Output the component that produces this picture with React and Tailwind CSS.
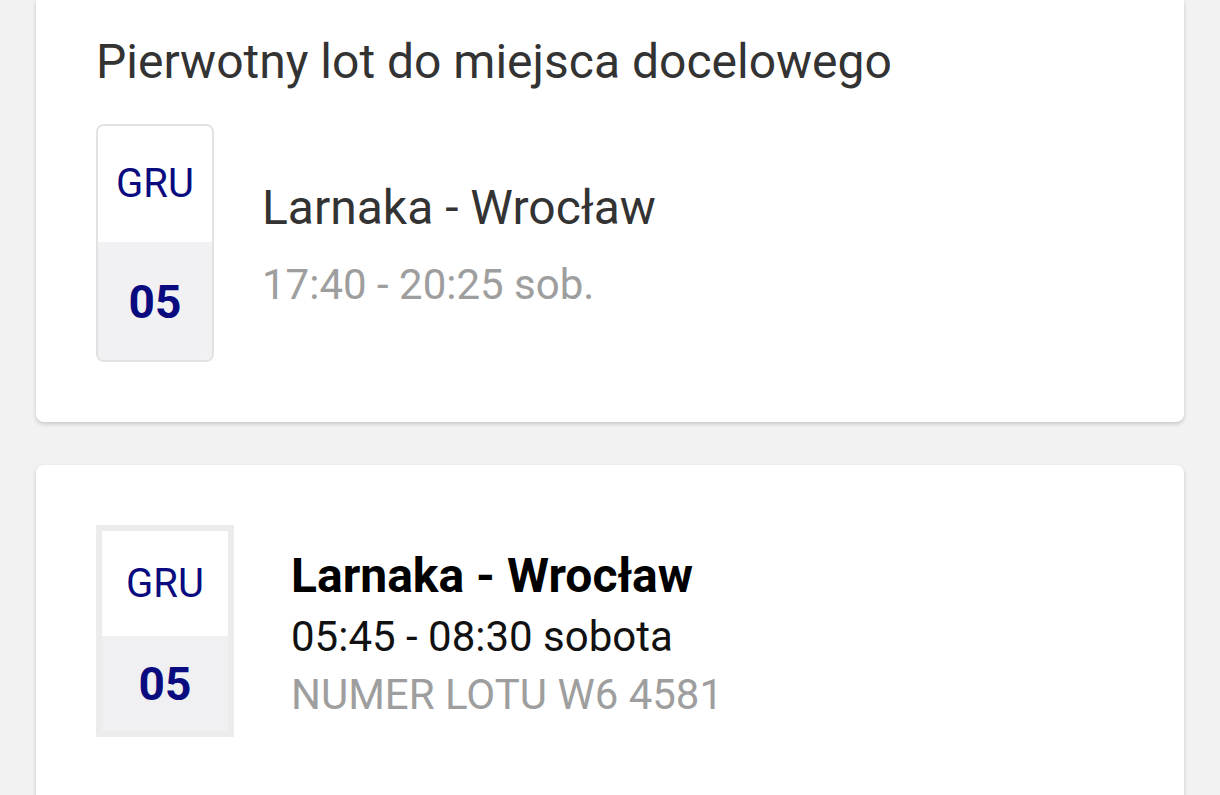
import React from "react";

const DateBadge = ({ month, day, variant }) => {
  if (variant === "outlined") {
    return (
      <div className="flex flex-col w-[118px] h-[238px] shrink-0 rounded-[8px] border-2 border-[#e2e2e2] overflow-hidden">
        <div className="flex-1 flex items-center justify-center bg-white text-[#0b0b80] text-[40px] leading-none">
          {month}
        </div>
        <div className="flex-1 flex items-center justify-center pt-[2px] bg-[#f1f1f4] text-[#0b0b80] text-[46px] font-bold leading-none">
          {day}
        </div>
      </div>
    );
  }

  return (
    <div className="flex flex-col w-[138px] h-[212px] shrink-0 border-[6px] border-[#ececec]">
      <div className="h-[105px] flex items-center justify-center bg-white text-[#0b0b80] text-[40px] leading-none">
        {month}
      </div>
      <div className="flex-1 flex items-center justify-center bg-[#f0f0f2] text-[#0b0b80] text-[46px] font-bold leading-none">
        {day}
      </div>
    </div>
  );
};

export default function App() {
  return (
    <div
      className="min-h-[795px] bg-[#f2f2f2] px-[36px] overflow-hidden"
      style={{ fontFamily: "Roboto, 'Noto Sans', sans-serif" }}
    >
      {/* original flight */}
      <div className="bg-white rounded-b-[8px] shadow-[0_2px_4px_rgba(0,0,0,0.18)] pl-[60px] pr-[60px] pt-[34px] pb-[60px]">
        <h2 className="text-[48px] leading-[56px] text-[#333333] font-normal">
          Pierwotny lot do miejsca docelowego
        </h2>

        <div className="flex items-center mt-[34px]">
          <DateBadge month="GRU" day="05" variant="outlined" />
          <div className="ml-[48px] pt-[2px]">
            <p className="text-[48px] leading-[56px] text-[#333333]">
              Larnaka - Wrocław
            </p>
            <p className="mt-[24px] text-[42px] leading-[49px] text-[#9e9e9e]">
              17:40 - 20:25 sob.
            </p>
          </div>
        </div>
      </div>

      {/* new flight */}
      <div className="mt-[43px] bg-white rounded-t-[8px] shadow-[0_2px_4px_rgba(0,0,0,0.18)] pl-[60px] pr-[60px] pt-[60px] pb-[80px]">
        <div className="flex items-center">
          <DateBadge month="GRU" day="05" />
          <div className="ml-[57px] pt-[10px]">
            <p className="text-[48px] leading-[56px] font-bold text-black">
              Larnaka - Wrocław
            </p>
            <p className="mt-[4px] text-[42px] leading-[58px] text-[#111111]">
              05:45 - 08:30 sobota
            </p>
            <p className="text-[42px] leading-[58px] text-[#9e9e9e]">
              NUMER LOTU W6 4581
            </p>
          </div>
        </div>
      </div>
    </div>
  );
}
